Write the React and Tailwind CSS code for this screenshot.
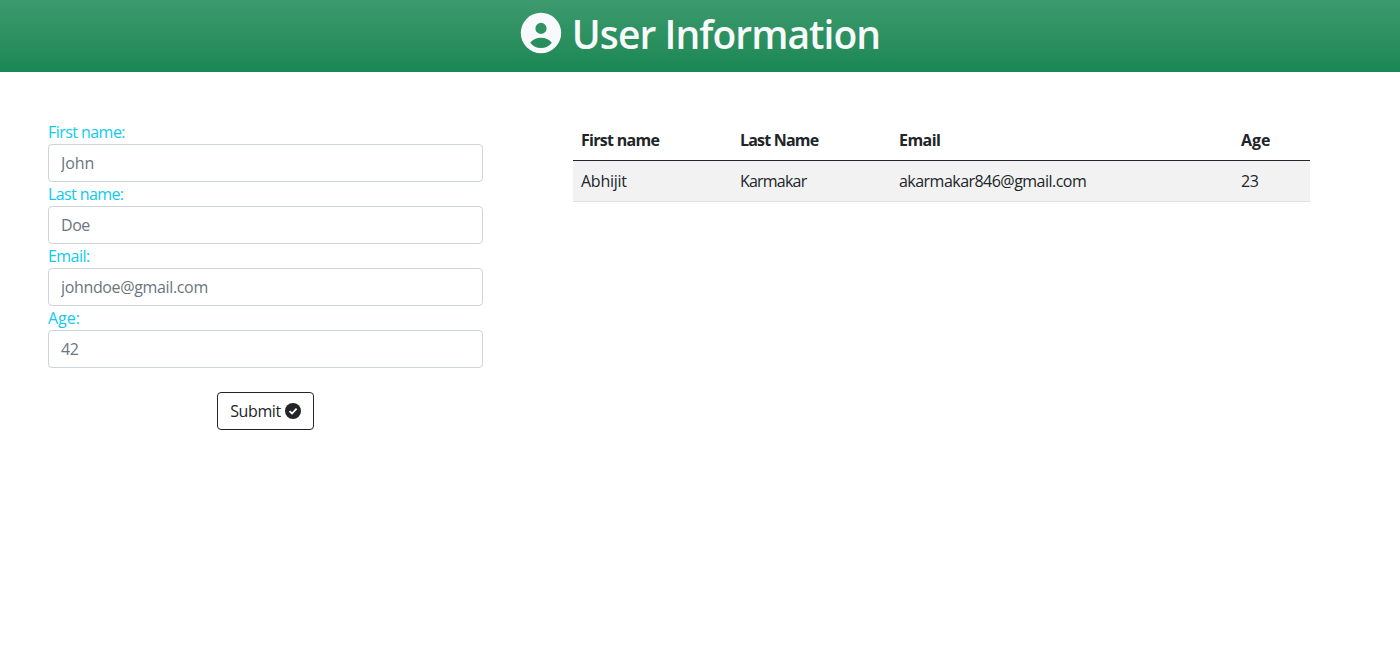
import React from "react";

const fields = [
  { label: "First name:", placeholder: "John", labelTrack: "tracking-[-0.55px]", track: "tracking-[-0.1px]" },
  { label: "Last name:", placeholder: "Doe", labelTrack: "tracking-[-0.6px]", track: "tracking-[-0.45px]" },
  { label: "Email:", placeholder: "johndoe@gmail.com", labelTrack: "tracking-[-0.55px]", track: "tracking-[-0.35px]" },
  { label: "Age:", placeholder: "42", labelTrack: "tracking-[0px]", track: "tracking-[-0.35px]" },
];

function AccountIcon() {
  return (
    <svg width="42" height="42" viewBox="0 0 42 42" fill="#f8f9fa" fillRule="evenodd" aria-hidden="true">
      <path d="M21 .8a20.2 20.2 0 1 0 0 40.4a20.2 20.2 0 1 0 0-40.4ZM21 10.8a5.6 5.6 0 1 1 0 11.2a5.6 5.6 0 1 1 0-11.2ZM10.2 30.8Q14.3 25.8 21 25.8Q27.7 25.8 31.8 30.8Q27.7 36 21 36Q14.3 36 10.2 30.8Z" />
    </svg>
  );
}

function CheckIcon() {
  return (
    <svg width="16" height="16" viewBox="0 0 16 16" aria-hidden="true">
      <circle cx="8" cy="8" r="8" fill="#212529" />
      <path d="M4.5 8.1L7 10.5L11.6 5.7" fill="none" stroke="#fff" strokeWidth="1.8" />
    </svg>
  );
}

export default function App() {
  return (
    <div className="min-h-screen bg-white font-['Open_Sans','Noto_Sans',sans-serif] text-base leading-6 text-[#212529]">
      <header className="flex h-[72px] items-start justify-center bg-linear-to-b from-[#3c9a6e] to-[#198754] pt-3">
        <div className="flex items-start gap-2.5">
          <AccountIcon />
          <h1 className="-mt-0.5 text-[39px] leading-[48px] font-semibold tracking-[-0.95px] whitespace-nowrap text-[#f8f9fa]">User Information</h1>
        </div>
      </header>
      <main className="flex items-start gap-[90px] pt-12 pl-12">
        <form className="flex w-[435px] flex-col" onSubmit={(e) => e.preventDefault()}>
          {fields.map((f) => (
            <label key={f.label} className="flex flex-col">
              <span className={`h-6 text-[#0dcaf0] ${f.labelTrack}`}>{f.label}</span>
              <input
                className={`h-[38px] w-full rounded border border-[#ced4da] bg-white px-3 outline-none placeholder:text-[#6c757d] ${f.track}`}
                placeholder={f.placeholder}
              />
            </label>
          ))}
          <button className="mt-6 flex h-[38px] w-[97px] items-center justify-center gap-1 self-center rounded border border-[#212529] tracking-[-0.4px]">
            <span>Submit</span>
            <CheckIcon />
          </button>
        </form>
        <table className="w-[737px] table-fixed border-collapse text-left tracking-[-0.35px]">
          <colgroup>
            <col className="w-[159px]" />
            <col className="w-[159px]" />
            <col className="w-[342px]" />
            <col className="w-[77px]" />
          </colgroup>
          <thead>
            <tr className="h-10 border-b border-[#212529] align-top font-bold">
              <th className="px-2 pt-2 tracking-[-0.7px]">First name</th>
              <th className="px-2 pt-2 tracking-[-0.8px]">Last Name</th>
              <th className="px-2 pt-2 tracking-[-0.55px]">Email</th>
              <th className="px-2 pt-2 tracking-[0px]">Age</th>
            </tr>
          </thead>
          <tbody>
            <tr className="h-[41px] border-b border-[#dee2e6] bg-[#f2f2f2]">
              <td className="px-2 tracking-[-0.25px]">Abhijit</td>
              <td className="px-2 tracking-[-0.8px]">Karmakar</td>
              <td className="px-2 tracking-[-0.53px]">akarmakar846@gmail.com</td>
              <td className="px-2 tracking-[-0.5px]">23</td>
            </tr>
          </tbody>
        </table>
      </main>
    </div>
  );
}
